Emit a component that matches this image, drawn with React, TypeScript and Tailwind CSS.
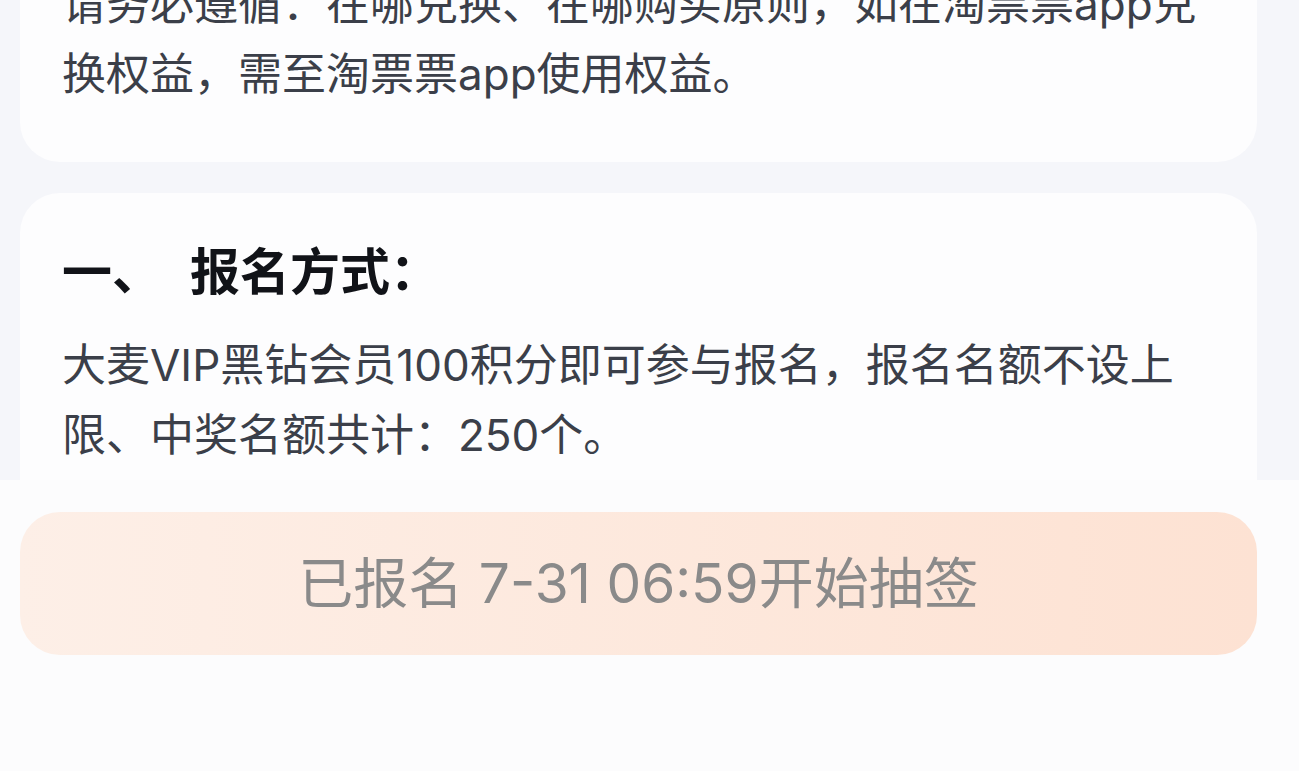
import React from 'react';

const font = { fontFamily: 'Inter, "Noto Sans CJK SC", sans-serif' };

function RuleCard({ children, className = '' }: { children: React.ReactNode; className?: string }) {
  return (
    <section className={`rounded-[40px] bg-[#fdfdfe] px-[42px] ${className}`}>
      {children}
    </section>
  );
}

export default function App() {
  return (
    <div className="flex h-[771px] w-full flex-col overflow-hidden bg-[#f5f6fa]" style={font}>
      {/* Scrollable rules area */}
      <main className="flex-1 overflow-hidden pl-[20px] pr-[42px]">
        <RuleCard className="-mt-[82px] pt-[51px] pb-[53px]">
          <p className="text-[44px] leading-[70px] text-[#3b3f49]">
            请务必遵循：在哪兑换、在哪购买原则，如在淘票票app兑
            <br />
            换权益，需至淘票票app使用权益。
          </p>
        </RuleCard>

        <RuleCard className="mt-[31px] pt-[46px] pb-[60px]">
          <h2 className="text-[50px] font-bold leading-[66px] text-[#111318]">
            一、<span className="ml-[28px]">报名方式：</span>
          </h2>
          <p className="mt-[25px] text-[44px] leading-[70px] text-[#3b3f49]">
            大麦VIP黑钻会员100积分即可参与报名，报名名额不设上
            <br />
            限、中奖名额共计：250个。
          </p>
        </RuleCard>
      </main>

      {/* Bottom action bar */}
      <footer className="h-[291px] shrink-0 bg-[#fcfcfd] pl-[20px] pr-[42px] pt-[32px]">
        <button className="flex h-[143px] w-full items-center justify-center rounded-[40px] bg-gradient-to-r from-[#fdefe7] to-[#fde2d3] text-[55px] text-[#8a8a8a]">
          已报名 7-31 06:59开始抽签
        </button>
      </footer>
    </div>
  );
}
